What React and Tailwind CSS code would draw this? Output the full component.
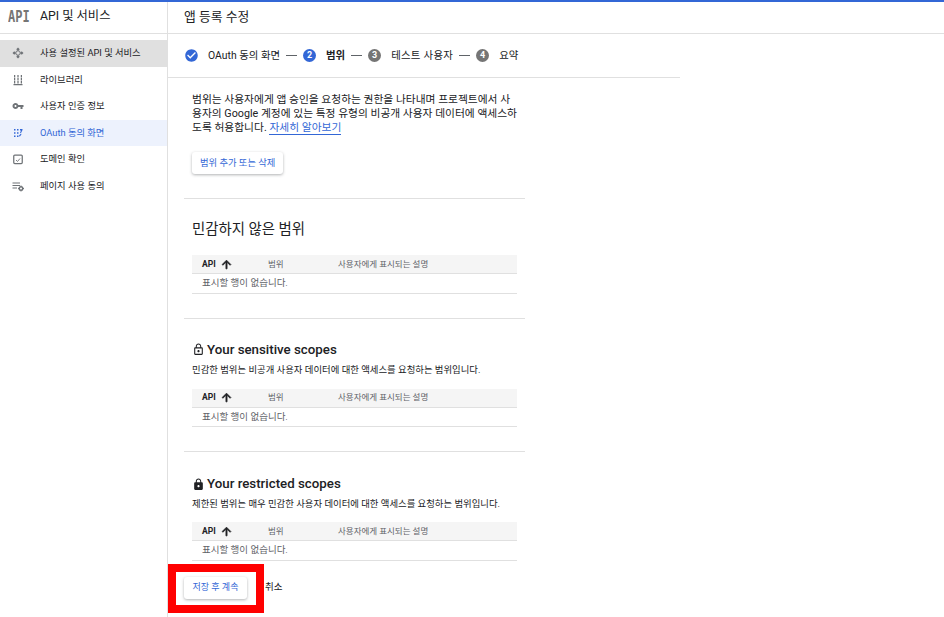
import React from 'react';
import { MdCheckCircle, MdLock, MdLockOutline, MdVpnKey } from 'react-icons/md';

const navItems = [
    { label: '사용 설정된 API 및 서비스', icon: 'api', selected: true },
    { label: '라이브러리', icon: 'library' },
    { label: '사용자 인증 정보', icon: 'key' },
    { label: 'OAuth 동의 화면', icon: 'consent', active: true },
    { label: '도메인 확인', icon: 'domain' },
    { label: '페이지 사용 동의', icon: 'settings' },
];

const NavIcon = ({ name, className }) => {
    if (name === 'api') return (
        <svg viewBox="0 0 24 24" className={className} fill="currentColor">
            <path d="M12 1l3.500 3.500L12 8 8.500 4.500zM12 16l3.500 3.500L12 23l-3.500-3.500zM4.500 8.500L8 12l-3.500 3.500L1 12zM19.500 8.500L23 12l-3.500 3.500L16 12z" />
            <circle cx="12" cy="12" r="4.500" fill="none" stroke="currentColor" strokeWidth="2" />
        </svg>
    );
    if (name === 'library') return (
        <svg viewBox="0 0 24 24" className={className} fill="currentColor">
            <path d="M4 2h2.500v5H4zM4 8h2.500v5H4zM4 14h2.500v5H4zM10.750 2h2.500v5h-2.500zM10.750 8h2.500v5h-2.500zM10.750 14h2.500v5h-2.500zM17.500 2H20v5h-2.500zM17.500 8H20v5h-2.500zM17.500 14H20v5h-2.500zM3 20h18v2.500H3z" />
        </svg>
    );
    if (name === 'key') return <MdVpnKey className={className} />;
    if (name === 'consent') return (
        <svg viewBox="0 0 24 24" className={className} fill="currentColor">
            <path d="M4 4h3v3H4zM4 10.500h3v3H4zM4 17h3v3H4zM10 4h3v3h-3zM10 10.500h3v3h-3zM10 17h3v3h-3zM16 4h5v2l-3 6h-2l2-5h-2zM14 17l4-4 1 1.500-3.500 5z" />
        </svg>
    );
    if (name === 'domain') return (
        <svg viewBox="0 0 24 24" className={className} fill="none" stroke="currentColor" strokeWidth="2.500">
            <rect x="3.500" y="4" width="17" height="17" rx="2" />
            <path d="M8 14l3 3 5-6" strokeWidth="1.800" />
        </svg>
    );
    return (
        <svg viewBox="0 0 24 24" className={className} fill="currentColor">
            <path d="M1 5h15v2H1zM1 10h15v2H1zM1 15h9v2H1z" />
            <circle cx="18" cy="17" r="3.500" fill="none" stroke="currentColor" strokeWidth="3" />
            <path d="M17 11h2v2h-2zM17 21h2v2h-2zM12 16h2v2h-2zM22 16h2v2h-2z" />
        </svg>
    );
};

const StepBadge = ({ n, color }) => (
    <span className={`flex h-[13px] w-[13px] shrink-0 items-center justify-center rounded-full text-[9px] font-bold text-white ${color}`}>{n}</span>
);

const StepDash = () => <span className="mx-[6px] h-px w-[11px] shrink-0 bg-[#5f6368]"></span>;

const ScopeTable = () => (
    <div className="mx-2">
        <div className="flex h-[19px] items-center border-b border-[#e0e0e0] bg-[#f5f5f5] text-[8.5px]">
            <span className="ml-[10px] flex w-[66px] items-center font-bold text-[#202124]">
                API
                <svg viewBox="0 0 24 24" className="ml-[4px] h-[13px] w-[13px]" fill="currentColor" stroke="currentColor" strokeWidth="1.500">
                    <path d="M4 12l1.410 1.410L11 7.830V20h2V7.830l5.580 5.590L20 12l-8-8z" />
                </svg>
            </span>
            <span className="w-[70px] text-[#5f6368]">범위</span>
            <span className="text-[#5f6368]">사용자에게 표시되는 설명</span>
        </div>
        <div className="flex h-[19.5px] items-center border-b border-[#e0e0e0] pl-[10px] text-[9.5px] text-[#5f6368]">표시할 행이 없습니다.</div>
    </div>
);

export default function App() {
    return (
        <div className="relative h-[617px] w-[944px] overflow-hidden bg-white text-[#202124]" style={{ fontFamily: '"Roboto", "Noto Sans CJK KR", sans-serif' }}>
            <div className="h-[2px] bg-[#3367d6]"></div>
            <div className="flex h-[615px]">
                {/* Sidebar */}
                <aside className="w-[168px] shrink-0 border-r border-[#e0e0e0]">
                    <div className="flex h-[32px] items-center border-b border-[#e0e0e0] pb-[2px]">
                        <span className="ml-2 w-[32px] origin-left scale-y-125 text-[12px] font-bold leading-none text-[#757575]" style={{ fontFamily: '"DejaVu Sans Mono", monospace' }}>API</span>
                        <span className="text-[12.3px]">API 및 서비스</span>
                    </div>
                    <nav className="pt-[6px]">
                        {navItems.map((item) => (
                            <div
                                key={item.label}
                                className={`flex h-[26.5px] items-center text-[9.3px] ${item.selected ? 'bg-[#e0e0e0]' : ''} ${item.active ? 'bg-[#edf2fd] text-[#3367d6]' : ''}`}
                            >
                                <NavIcon name={item.icon} className={`ml-[12px] mr-[16px] h-[12px] w-[12px] shrink-0 ${item.active ? 'text-[#3367d6]' : 'text-[#6f7377]'}`} />
                                <span>{item.label}</span>
                            </div>
                        ))}
                    </nav>
                </aside>

                {/* Main */}
                <main className="min-w-0 flex-1">
                    <div className="flex h-[32px] items-center border-b border-[#e0e0e0] pb-[2px] pl-4 text-[12.8px]">앱 등록 수정</div>

                    {/* Stepper */}
                    <div className="flex h-[44px] w-[512px] items-center border-b border-[#e0e0e0] pl-[16px] text-[10.4px]">
                        <MdCheckCircle className="h-[15px] w-[15px] shrink-0 text-[#3367d6]" />
                        <span className="ml-[9px]">OAuth 동의 화면</span>
                        <StepDash />
                        <StepBadge n="2" color="bg-[#3367d6]" />
                        <span className="ml-[10px] font-bold">범위</span>
                        <StepDash />
                        <StepBadge n="3" color="bg-[#757575]" />
                        <span className="ml-[10px] tracking-[0.3px]">테스트 사용자</span>
                        <StepDash />
                        <StepBadge n="4" color="bg-[#757575]" />
                        <span className="ml-[10px]">요약</span>
                    </div>

                    <div className="w-[357px] pl-4">
                        <div className="px-2">
                            <p className="pt-[15px] text-[10.75px] leading-[14px]">
                                범위는 사용자에게 앱 승인을 요청하는 권한을 나타내며 프로젝트에서 사용자의 Google 계정에 있는 특정 유형의 비공개 사용자 데이터에 액세스하도록 허용합니다. <span className="border-b border-[#3367d6] text-[#3367d6]">자세히 알아보기</span>
                            </p>
                            <button className="mt-[17px] h-[22px] rounded-[3px] bg-white px-2 text-[9.3px] text-[#3367d6] shadow-[0_1px_3px_rgba(60,64,67,0.4)]">범위 추가 또는 삭제</button>
                        </div>

                        <hr className="mt-[24px] border-[#e0e0e0]" />
                        <h2 className="mt-[21px] px-2 text-[14.4px] leading-[20px]">민감하지 않은 범위</h2>
                        <div className="mt-[15px]"><ScopeTable /></div>

                        <hr className="mt-[24px] border-[#e0e0e0]" />
                        <h3 className="mt-[23px] flex items-center px-2 text-[13.3px] font-medium leading-[16px]">
                            <MdLockOutline className="mr-[2px] h-[13px] w-[13px]" />
                            Your sensitive scopes
                        </h3>
                        <p className="mt-[5px] px-2 text-[9.4px] leading-[14px]">민감한 범위는 비공개 사용자 데이터에 대한 액세스를 요청하는 범위입니다.</p>
                        <div className="mt-[12px]"><ScopeTable /></div>

                        <hr className="mt-[24px] border-[#e0e0e0]" />
                        <h3 className="mt-[24px] flex items-center px-2 text-[13.3px] font-medium leading-[16px]">
                            <MdLock className="mr-[2px] h-[13px] w-[13px]" />
                            Your restricted scopes
                        </h3>
                        <p className="mt-[5px] px-2 text-[9.4px] leading-[14px]">제한된 범위는 매우 민감한 사용자 데이터에 대한 액세스를 요청하는 범위입니다.</p>
                        <div className="mt-[11px]"><ScopeTable /></div>

                        <div className="mt-[16px] flex items-center">
                            <button className="h-[22px] w-[63px] rounded-[3px] bg-white text-[9px] text-[#3367d6] shadow-[0_1px_3px_rgba(60,64,67,0.4)]">저장 후 계속</button>
                            <span className="ml-[18px] text-[9.5px]">취소</span>
                        </div>
                    </div>
                </main>
            </div>

            {/* Red annotation box */}
            <div className="absolute left-[168px] top-[564px] h-[49px] w-[96px] border-[8px] border-[#ff0000]"></div>
        </div>
    );
}
